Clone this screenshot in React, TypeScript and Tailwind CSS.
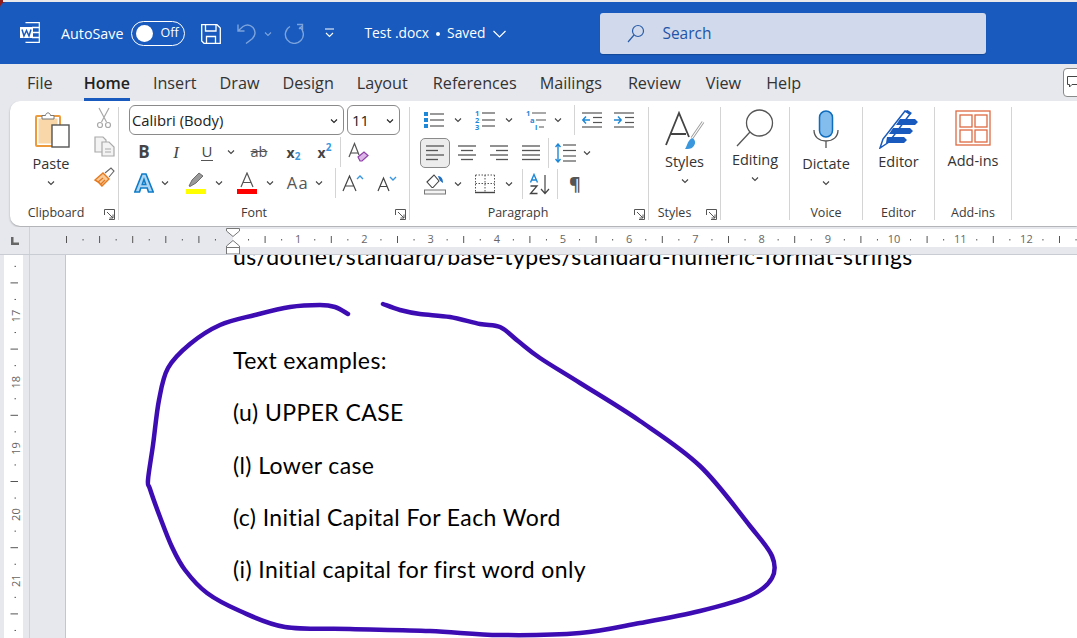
import React from "react";

const ui = "font-['Open_Sans',sans-serif]";

const tabs = ["File", "Home", "Insert", "Draw", "Design", "Layout", "References", "Mailings", "Review", "View", "Help"];

const tabClass: Record<string, string> = {
    File: "mr-[8px]",
    Home: "text-[16px] font-semibold text-[#222] border-b-[3px] border-[#185abd] pt-[3px]",
    References: "ml-[2px]",
    Review: "ml-[3px]",
    View: "ml-[2px]",
    Help: "ml-[2px]",
};

const docLines = ["Text examples:", "(u) UPPER CASE", "(l) Lower case", "(c) Initial Capital For Each Word", "(i) Initial capital for first word only"];

const inkPoints: [number, number][] = [
    [348, 59], [335, 52], [320, 50], [290, 52], [255, 60], [220, 70], [190, 89], [168, 113], [159, 145],
    [153, 190], [148, 225], [150, 234], [160, 262], [172, 292], [185, 315], [207, 338], [240, 356], [285, 372],
    [350, 374], [430, 376], [500, 380], [580, 378], [640, 368], [700, 356], [750, 341], [772, 323], [772, 301],
    [750, 271], [700, 211], [640, 166], [580, 128], [540, 103], [518, 86], [500, 72], [480, 69], [450, 62], [420, 59], [400, 55], [383, 49],
];

// smooth line through the hand drawn points
function smoothPath(pts: [number, number][]) {
    let d = `M${pts[0][0]} ${pts[0][1]}`;
    for (let i = 0; i < pts.length - 1; i++) {
        const p0 = pts[Math.max(i - 1, 0)];
        const p1 = pts[i];
        const p2 = pts[i + 1];
        const p3 = pts[Math.min(i + 2, pts.length - 1)];
        d += ` C${p1[0] + (p2[0] - p0[0]) / 6} ${p1[1] + (p2[1] - p0[1]) / 6} ${p2[0] - (p3[0] - p1[0]) / 6} ${p2[1] - (p3[1] - p1[1]) / 6} ${p2[0]} ${p2[1]}`;
    }
    return d;
}

function Chev({ c = "#444", s = 8 }: { c?: string; s?: number }) {
    return (
        <svg width={s} height={s} viewBox="0 0 8 8" fill="none">
            <path d="M1 2.500 4 5.500 7 2.500" stroke={c} strokeWidth="1.100" />
        </svg>
    );
}

function Launcher() {
    return (
        <svg width="11" height="11" viewBox="0 0 11 11" fill="none" stroke="#555" strokeWidth="1">
            <path d="M.5 6V.5H10.500V10.500H5" />
            <path d="M3 3 9 9M9 5.500V9H5.500" />
        </svg>
    );
}

function Cell({ className = "", children }: { className?: string; children?: React.ReactNode }) {
    return <div className={`flex items-center justify-center shrink-0 h-full ${className}`}>{children}</div>;
}

function Sep() {
    return <div className="w-px my-[6px] bg-[#d4d4d4] shrink-0" />;
}

function RowSep({ className = "" }: { className?: string }) {
    return <div className={`w-px h-[30px] bg-[#d4d4d4] shrink-0 ${className}`} />;
}

function Group({ label, launcher, labelClass = "", className = "", children }: { label: string; launcher?: boolean; labelClass?: string; className?: string; children: React.ReactNode }) {
    return (
        <div className={`relative flex flex-col shrink-0 ${className}`}>
            <div className="flex-1 min-h-0">{children}</div>
            <div className={`h-[16px] mb-[5px] flex items-center justify-center text-[12.500px] leading-none text-[#3a3a3a] ${labelClass}`}>{label}</div>
            {launcher && (
                <div className="absolute right-[3px] bottom-[6px] flex">
                    <Launcher />
                </div>
            )}
        </div>
    );
}

function BigButton({ icon, text, chev = true, className = "" }: { icon: React.ReactNode; text: string; chev?: boolean; className?: string }) {
    return (
        <div className={`flex flex-col items-center ${className}`}>
            {icon}
            <div className="text-[14.500px] leading-[20px] text-[#333]">{text}</div>
            {chev && (
                <div className="mt-[5px] flex">
                    <Chev />
                </div>
            )}
        </div>
    );
}

function Lines({ x = 4, w = 16, ys = [6, 12, 18], c = "#555" }: { x?: number; w?: number; ys?: number[]; c?: string }) {
    return <>{ys.map((y) => <path key={y} d={`M${x} ${y}h${w}`} stroke={c} strokeWidth="1.200" />)}</>;
}

function AlignIcon({ kind }: { kind: "left" | "center" | "right" | "justify" }) {
    const rows = [4, 8.500, 13, 17.500];
    const long = 18;
    const short = 12;
    return (
        <svg width="22" height="22" viewBox="0 0 22 22" fill="none">
            {rows.map((y, i) => {
                const w = kind === "justify" || i % 2 === 0 ? long : short;
                const x = kind === "left" || kind === "justify" ? 2 : kind === "right" ? 20 - w : 11 - w / 2;
                return <path key={y} d={`M${x} ${y}h${w}`} stroke="#555" strokeWidth="1.300" />;
            })}
        </svg>
    );
}

function TitleBar() {
    return (
        <div className="bg-[#8f1d1d] shrink-0">
            <div className="h-[2px] ml-[3px] bg-[#ebe9e9]" />
            <div className="h-[62px] pt-[1px] bg-[#185abd] rounded-tl-[6px] flex items-center text-white">
                <svg className="ml-[20px] mb-[2px]" width="20" height="21" viewBox="0 0 20 21" fill="none">
                    <path d="M5.500 .7H19.300V20.300H5.500" stroke="#fff" strokeWidth="1.200" />
                    <path d="M12 5.500h7M12 10.500h7M12 15.500h7" stroke="#fff" strokeWidth="1.300" />
                    <rect x="0" y="5" width="13" height="11" fill="#fff" />
                    <path d="M2 7.500 4 14 6.500 8.500 9 14 11 7.500" stroke="#185abd" strokeWidth="1.500" />
                </svg>
                <span className="ml-[21px] text-[14.300px]">AutoSave</span>
                <div className="ml-[8px] w-[54px] h-[25px] rounded-full border border-white flex items-center pl-[4px]">
                    <div className="w-[17px] h-[17px] rounded-full bg-white" />
                    <span className="ml-[7px] text-[12.500px] leading-none">Off</span>
                </div>
                <svg className="ml-[16px]" width="20" height="20" viewBox="0 0 20 20" fill="none" stroke="#fff" strokeWidth="1.300">
                    <path d="M.7.7H16L19.300 4V19.300H3L.7 17Z" />
                    <path d="M4.500.7V7H15V.7M5.500 19.300V12.500H14.500V19.300" />
                </svg>
                <svg className="ml-[16px]" width="19" height="21" viewBox="0 0 19 21" fill="none" stroke="#7ca3dc" strokeWidth="1.400">
                    <path d="M1 1.500V8H7.500M1.500 7.500 6 3.500C9 1.500 13 1.500 16 4.500 18.800 8 18.500 12 15.500 15.500L9 20.500" />
                </svg>
                <div className="ml-[8px] flex">
                    <Chev c="#7ca3dc" />
                </div>
                <svg className="ml-[12px]" width="20" height="21" viewBox="0 0 20 21" fill="none" stroke="#7ca3dc" strokeWidth="1.400">
                    <path d="M13 1.500H18.500V7M18.300 3 15 6M6 3.500A9 9 0 1 0 15.500 4" />
                </svg>
                <svg className="ml-[21px]" width="9" height="11" viewBox="0 0 9 11" fill="none" stroke="#fff" strokeWidth="1.100">
                    <path d="M0 1h9M1 5 4.500 8.500 8 5" />
                </svg>
                <span className="ml-[30px] text-[13.800px] whitespace-nowrap">Test .docx</span>
                <span className="ml-[7px] w-[4px] h-[4px] rounded-full bg-white" />
                <span className="ml-[7px] text-[13.800px]">Saved</span>
                <svg className="ml-[8px]" width="13" height="8" viewBox="0 0 13 8" fill="none" stroke="#fff" strokeWidth="1.200">
                    <path d="M.5 1 6.500 7 12.500 1" />
                </svg>
                <div className="ml-[94px] w-[386px] h-[41px] rounded-[3px] bg-[#d0daec] flex items-center pl-[27px] text-[#1f54a8] shadow-[0_1px_1px_rgba(0,0,0,0.2)]">
                    <svg width="18" height="19" viewBox="0 0 18 19" fill="none" stroke="#2a5ba8" strokeWidth="1.200">
                        <circle cx="11" cy="7" r="5.500" />
                        <path d="M7 11 1 18" />
                    </svg>
                    <span className="ml-[17px] text-[15.500px]">Search</span>
                </div>
            </div>
        </div>
    );
}

function TabRow() {
    return (
        <div className="h-[37px] pt-[1px] flex bg-[#e6e8ed] pl-[27px] gap-[23px] relative shrink-0 text-[16.200px] text-[#333]">
            {tabs.map((t) => (
                <div key={t} className={`h-full flex items-center relative ${tabClass[t] ?? ""}`}>
                    {t}
                </div>
            ))}
            <div className="absolute right-[-10px] top-[4px] w-[24px] h-[29px] rounded-[4px] border border-[#8a8a8a] bg-white pl-[3px] pt-[7px]">
                <svg width="12" height="13" viewBox="0 0 12 13" fill="none" stroke="#444" strokeWidth="1">
                    <path d="M.5.5H11.500V8.500H5L2.500 11V8.500H.5Z" />
                </svg>
            </div>
        </div>
    );
}

function ClipboardGroup() {
    return (
        <Group label="Clipboard" launcher labelClass="pr-[16px]" className="w-[108px]">
            <div className="flex h-full">
                <div className="w-[82px] flex justify-center pt-[10px]">
                    <BigButton
                        text="Paste"
                        icon={
                            <svg width="36" height="38" viewBox="0 0 36 38" fill="none" className="mb-[5px] ml-[3px]">
                                <rect x="1" y="5" width="24" height="30" rx="1" fill="#fff" stroke="#ec9a3c" strokeWidth="2" />
                                <rect x="3.500" y="7.500" width="19" height="25" fill="#f9d7a8" />
                                <path d="M7 8V4.500H10.500C11 1 15 1 15.500 4.500H19V8Z" fill="#fff" stroke="#777" strokeWidth="1" />
                                <rect x="17" y="14" width="17" height="22" fill="#fff" stroke="#555" strokeWidth="1.400" />
                            </svg>
                        }
                    />
                </div>
                <div className="flex flex-col items-center w-[24px] pt-[5px]">
                    <svg width="16" height="22" viewBox="0 0 16 22" fill="none" stroke="#a8a8a8" strokeWidth="1.200" className="mt-[1px]">
                        <path d="M3 1 10.500 15M13 1 5.500 15" />
                        <circle cx="4" cy="18" r="2.500" />
                        <circle cx="12" cy="18" r="2.500" />
                    </svg>
                    <svg width="21" height="21" viewBox="0 0 21 21" fill="none" stroke="#aaa" strokeWidth="1.200" className="mt-[7px]">
                        <path d="M1 1H9L12 4V16H1Z" fill="#f3f3f3" />
                        <path d="M8 6H15L20 11V20H8Z" fill="#f3f3f3" />
                        <path d="M11 13H17M11 16H17" />
                    </svg>
                    <svg width="21" height="20" viewBox="0 0 21 20" fill="none" className="mt-[10px]">
                        <path d="M1 13 9 6 15 12 8 19C6 16 3 14 1 13Z" fill="#f9c998" stroke="#e57a1f" strokeWidth="1.400" />
                        <path d="M4 15 9 11M7 17 11 13" stroke="#e57a1f" strokeWidth="1.200" />
                        <path d="M11 6 17 1 20 4 15 10" fill="#fff" stroke="#666" strokeWidth="1.100" />
                    </svg>
                </div>
            </div>
        </Group>
    );
}

function FontGroup() {
    const letter = "text-[#444] leading-none";
    return (
        <Group label="Font" launcher labelClass="pr-[20px]" className="w-[290px]">
            <div className="pl-[9px]">
                <div className="flex gap-[3px] pt-[4px] pl-[1px]">
                    <div className="w-[215px] h-[30px] rounded-[6px] border border-[#8a8a8a] flex items-center justify-between pl-[2px] pr-[5px] pt-[1px] text-[14.800px] text-[#222]">
                        Calibri (Body)
                        <Chev c="#222" />
                    </div>
                    <div className="w-[53px] h-[30px] rounded-[6px] border border-[#8a8a8a] flex items-center justify-between pl-[4px] pr-[5px] pt-[1px] text-[14.800px] text-[#222]">
                        11
                        <Chev c="#222" />
                    </div>
                </div>
                <div className="flex h-[30px] mt-[2px] items-center">
                    <Cell className="w-[32px] text-[17px] font-bold text-[#444]">B</Cell>
                    <Cell className={`w-[32px] text-[17px] italic ${letter} font-['Liberation_Serif',serif]`}>I</Cell>
                    <Cell className="w-[30px]">
                        <div className="text-[15px] leading-[17px] border-b-[1.500px] border-[#555] text-[#444] px-[1px]">U</div>
                    </Cell>
                    <Cell className="w-[18px]"><Chev /></Cell>
                    <Cell className="w-[38px] relative text-[14.500px] text-[#555]">
                        <span className="line-through">ab</span>
                    </Cell>
                    <Cell className="w-[31px]">
                        <span className="text-[14px] font-bold text-[#444]">x</span>
                        <span className="text-[10px] font-bold text-[#3a96dd] mt-[8px]">2</span>
                    </Cell>
                    <Cell className="w-[31px]">
                        <span className="text-[14px] font-bold text-[#444]">x</span>
                        <span className="text-[10px] font-bold text-[#3a96dd] mb-[9px]">2</span>
                    </Cell>
                    <RowSep />
                    <Cell className="w-[34px]">
                        <svg width="22" height="20" viewBox="0 0 22 20" fill="none">
                            <path d="M2 15 7.500 1.500 12 13" stroke="#555" strokeWidth="1.200" />
                            <path d="M4 11h7" stroke="#555" strokeWidth="1.100" />
                            <path d="M11 15 17 10 21 13.500 15 19H13Z" fill="#dcb6e6" stroke="#8e3fa8" strokeWidth="1.200" />
                        </svg>
                    </Cell>
                </div>
                <div className="flex h-[32px] items-center">
                    <Cell className="w-[32px]">
                        <svg width="20" height="20" viewBox="0 0 20 20" fill="none">
                            <path d="M.8 19 8 1H12L19.200 19H14.500L13.200 15H6.800L5.500 19ZM8.300 11.500H11.700L10 6.500Z" fill="#aed5f2" stroke="#0f7cc9" strokeWidth="1.600" />
                        </svg>
                    </Cell>
                    <Cell className="w-[10px]"><Chev /></Cell>
                    <Cell className="w-[32px] ml-[10px]">
                        <svg width="20" height="22" viewBox="0 0 20 22" fill="none">
                            <path d="M3 14 6 8 13 1 17 4 10 11 4 14.500Z" fill="#999" stroke="#555" strokeWidth=".8" />
                            <rect y="17" width="20" height="5" fill="#ffff00" />
                        </svg>
                    </Cell>
                    <Cell className="w-[14px]"><Chev /></Cell>
                    <Cell className="w-[32px] ml-[5px]">
                        <svg width="20" height="22" viewBox="0 0 20 22" fill="none">
                            <path d="M4 15 10 1 16 15M6 10.500H14" stroke="#555" strokeWidth="1.200" />
                            <rect y="17" width="20" height="5" fill="#ff0000" />
                        </svg>
                    </Cell>
                    <Cell className="w-[14px]"><Chev /></Cell>
                    <Cell className="w-[32px] ml-[5px] text-[16.500px] text-[#555] tracking-[1.500px]">Aa</Cell>
                    <Cell className="w-[10px]"><Chev /></Cell>
                    <RowSep className="ml-[11px]" />
                    <Cell className="w-[34px]">
                        <svg width="22" height="18" viewBox="0 0 22 18" fill="none">
                            <path d="M1 17 7.500 2 14 17M3.500 12H11.500" stroke="#444" strokeWidth="1.200" />
                            <path d="M15 5 18 2 21 5" stroke="#3a96dd" strokeWidth="1.400" />
                        </svg>
                    </Cell>
                    <Cell className="w-[34px]">
                        <svg width="20" height="17" viewBox="0 0 20 17" fill="none">
                            <path d="M1 16 6.500 3 12 16M3 11.500H10" stroke="#444" strokeWidth="1.200" />
                            <path d="M13 2 16 5 19 2" stroke="#3a96dd" strokeWidth="1.400" />
                        </svg>
                    </Cell>
                </div>
            </div>
        </Group>
    );
}

function ParagraphGroup() {
    return (
        <Group label="Paragraph" launcher labelClass="pr-[22px]" className="w-[238px]">
            <div className="pl-[10px]">
                <div className="flex h-[30px] mt-[4px] items-center">
                    <Cell className="w-[28px]">
                        <svg width="20" height="18" viewBox="0 0 20 18" fill="none">
                            <rect x="0" y="1" width="4" height="4" fill="#1e88d8" />
                            <rect x="0" y="7" width="4" height="4" fill="#1e88d8" />
                            <rect x="0" y="13" width="4" height="4" fill="#1e88d8" />
                            <Lines x={6} w={14} ys={[3, 9, 15]} />
                        </svg>
                    </Cell>
                    <Cell className="w-[20px]"><Chev /></Cell>
                    <Cell className="w-[28px] ml-[3px]">
                        <svg width="20" height="22" viewBox="0 0 20 22" fill="none">
                            <text x="0" y="7" fontSize="7.500" fontWeight="700" fill="#1e88d8" fontFamily="Open Sans">1</text>
                            <text x="0" y="14" fontSize="7.500" fontWeight="700" fill="#1e88d8" fontFamily="Open Sans">2</text>
                            <text x="0" y="21" fontSize="7.500" fontWeight="700" fill="#1e88d8" fontFamily="Open Sans">3</text>
                            <Lines x={7} w={13} ys={[4, 11, 17]} />
                        </svg>
                    </Cell>
                    <Cell className="w-[20px]"><Chev /></Cell>
                    <Cell className="w-[28px] ml-[4px]">
                        <svg width="22" height="22" viewBox="0 0 22 22" fill="none">
                            <text x="0" y="7" fontSize="7.500" fontWeight="700" fill="#1e88d8" fontFamily="Open Sans">1</text>
                            <text x="4" y="14" fontSize="7.500" fontWeight="700" fill="#1e88d8" fontFamily="Open Sans">a</text>
                            <text x="9" y="21" fontSize="7.500" fontWeight="700" fill="#1e88d8" fontFamily="Open Sans">i</text>
                            <path d="M6 4H20M10 11H20M13 18H18" stroke="#555" strokeWidth="1.200" />
                        </svg>
                    </Cell>
                    <Cell className="w-[14px]"><Chev /></Cell>
                    <RowSep className="ml-[9px]" />
                    <Cell className="w-[32px] ml-[1px]">
                        <svg width="20" height="16" viewBox="0 0 20 16" fill="none">
                            <Lines x={0} w={20} ys={[1, 15]} />
                            <Lines x={11} w={9} ys={[5.500, 10.500]} />
                            <path d="M8 8H1M4 4.500 .8 8 4 11.500" stroke="#1e88d8" strokeWidth="1.400" />
                        </svg>
                    </Cell>
                    <Cell className="w-[32px]">
                        <svg width="20" height="16" viewBox="0 0 20 16" fill="none">
                            <Lines x={0} w={20} ys={[1, 15]} />
                            <Lines x={11} w={9} ys={[5.500, 10.500]} />
                            <path d="M0 8H7M4 4.500 7.200 8 4 11.500" stroke="#1e88d8" strokeWidth="1.400" />
                        </svg>
                    </Cell>
                </div>
                <div className="flex h-[30px] mt-[3px] items-center">
                    <Cell className="w-[30px] rounded-[5px] border border-[#8a8a8a] bg-[#ececec]"><AlignIcon kind="left" /></Cell>
                    <Cell className="w-[30px] ml-[2px]"><AlignIcon kind="center" /></Cell>
                    <Cell className="w-[30px] ml-[2px]"><AlignIcon kind="right" /></Cell>
                    <Cell className="w-[30px] ml-[2px]"><AlignIcon kind="justify" /></Cell>
                    <RowSep className="ml-[2px]" />
                    <Cell className="w-[30px] ml-[1px]">
                        <svg width="21" height="20" viewBox="0 0 21 20" fill="none">
                            <path d="M3 1V19M.5 4 3 1 5.500 4M.5 16 3 19 5.500 16" stroke="#1e88d8" strokeWidth="1.400" />
                            <Lines x={8} w={13} ys={[2, 7.500, 13, 18]} />
                        </svg>
                    </Cell>
                    <Cell className="w-[14px]"><Chev /></Cell>
                </div>
                <div className="flex h-[30px] mt-[1px] items-center">
                    <Cell className="w-[30px]">
                        <svg width="22" height="22" viewBox="0 0 22 22" fill="none">
                            <path d="M3 9 10 2 15 8 9 14.500H8Z" fill="#fff" stroke="#444" strokeWidth="1.100" />
                            <path d="M14 3C18 3 19 7 19 10 17 9 15 7 14 3Z" fill="#1e6fc4" />
                            <rect x=".5" y="17" width="21" height="4" fill="#f4f4f4" stroke="#777" />
                        </svg>
                    </Cell>
                    <Cell className="w-[16px]"><Chev /></Cell>
                    <Cell className="w-[28px] ml-[5px]">
                        <svg width="20" height="20" viewBox="0 0 20 20" fill="none">
                            <path d="M.5 1H19.500M.5 1V18M19.500 1V18M10 1V18M.5 9.500H19.500" stroke="#555" strokeWidth="1" strokeDasharray="1.500 1.500" />
                            <path d="M0 18.500H20" stroke="#444" strokeWidth="1.400" />
                        </svg>
                    </Cell>
                    <Cell className="w-[20px]"><Chev /></Cell>
                    <RowSep className="ml-[3px]" />
                    <Cell className="w-[34px]">
                        <svg width="22" height="22" viewBox="0 0 22 22" fill="none">
                            <path d="M1.500 9.500 5 1.500 8.500 9.500M2.800 7H7.200" stroke="#1e88d8" strokeWidth="1.400" />
                            <path d="M1.500 13H8L1.500 20.500H8.500" stroke="#444" strokeWidth="1.300" />
                            <path d="M16 2V20M12 16 16 20.500 20 16" stroke="#444" strokeWidth="1.200" />
                        </svg>
                    </Cell>
                    <RowSep />
                    <Cell className="w-[34px] text-[18px] font-bold text-[#555]">¶</Cell>
                </div>
            </div>
        </Group>
    );
}

function DocRuler() {
    const marks: React.ReactNode[] = [];
    // 16.55px per quarter, number 1 sits at x=298
    for (let q = -10; q <= 52; q++) {
        const x = 232 + q * 16.55;
        if (x < 60 || (x > 222 && x < 245)) continue;
        const kind = ((q % 4) + 4) % 4;
        if (kind === 0) {
            const n = q / 4;
            if (n > 0) {
                marks.push(<text key={q} x={x} y="16" textAnchor="middle" fontSize="11" fill="#666" fontFamily="Open Sans">{n}</text>);
            } else {
                marks.push(<path key={q} d={`M${x} 9V16`} stroke="#555" />);
            }
        } else if (kind === 2) {
            marks.push(<path key={q} d={`M${x} 9V16`} stroke="#555" />);
        } else {
            marks.push(<path key={q} d={`M${x} 12V13.500`} stroke="#555" />);
        }
    }
    return (
        <div className="relative h-[28px] shrink-0 bg-[#e6e8ed] border-b border-[#c9ccd2] flex">
            <div className="w-[30px] border-r border-[#cfd2d8] flex items-center justify-center">
                <svg width="8" height="8" viewBox="0 0 8 8" className="ml-[1px]">
                    <path d="M0 0H2.500V5.500H8V8H0Z" fill="#666" />
                </svg>
            </div>
            <div className="flex-1 relative overflow-hidden">
                <div className="absolute left-[203px] right-0 top-[2px] h-[18px] bg-white" />
                <svg className="absolute left-[-30px] top-0" width="1107" height="28" fill="none">
                    {marks}
                    <path d="M226.500 1.500H239.500V4L233 9.500 226.500 4Z" fill="#fff" stroke="#777" />
                    <path d="M233 13.500 239.500 19V27H226.500V19Z" fill="#fff" stroke="#777" />
                    <path d="M226.500 20.500H239.500" stroke="#777" />
                </svg>
            </div>
        </div>
    );
}

function SideRuler() {
    const marks: React.ReactNode[] = [];
    for (let q = 0; q <= 24; q++) {
        const y = 316 - 255 + (q - 4) * 16.55;
        if (y < 0) continue;
        const kind = q % 4;
        if (kind === 0) {
            const n = 16 + q / 4;
            marks.push(<text key={q} x="0" y="0" textAnchor="middle" dominantBaseline="central" fontSize="11" fill="#666" fontFamily="Open Sans" transform={`translate(15 ${y}) rotate(-90)`}>{n}</text>);
        } else if (kind === 2) {
            marks.push(<path key={q} d={`M10.500 ${y}H18`} stroke="#555" />);
        } else {
            marks.push(<path key={q} d={`M14.500 ${y}H16`} stroke="#555" />);
        }
    }
    return (
        <div className="w-[30px] shrink-0 border-r border-[#cfd2d8] pl-[4px] pr-[6px] flex">
            <div className="w-[19px] h-full bg-white overflow-hidden">
                <svg className="ml-[-4px]" width="23" height="384" fill="none">{marks}</svg>
            </div>
        </div>
    );
}

export default function App() {
    return (
        <div className={`w-[1077px] h-[638px] overflow-hidden flex flex-col bg-[#e6e8ed] ${ui}`}>
            <TitleBar />
            <TabRow />
            <div className="h-[125px] ml-[10px] bg-white rounded-l-[10px] flex shrink-0 shadow-[0_1px_2px_rgba(0,0,0,0.3)]">
                <ClipboardGroup />
                <Sep />
                <FontGroup />
                <Sep />
                <ParagraphGroup />
                <Sep />
                <Group label="Styles" launcher labelClass="pr-[20px]" className="w-[71px]">
                    <BigButton
                        className="pt-[10px]"
                        text="Styles"
                        icon={
                            <svg width="40" height="40" viewBox="0 0 40 40" fill="none" className="mb-[1px]">
                                <path d="M1 34 14 2 24 26M6 23H21" stroke="#444" strokeWidth="1.800" />
                                <path d="M38 11 27 27" stroke="#999" strokeWidth="3" />
                                <path d="M38 11 27 27" stroke="#fff" strokeWidth="1.200" />
                                <path d="M20 38C22 36 22 30 27 27 31 29 31 33 28 36 26 38 23 38 20 38Z" fill="#3a96dd" />
                            </svg>
                        }
                    />
                </Group>
                <Sep />
                <Group label="" className="w-[68px]">
                    <BigButton
                        className="pt-[8px]"
                        text="Editing"
                        icon={
                            <svg width="38" height="38" viewBox="0 0 38 38" fill="none" stroke="#555" strokeWidth="1.300" className="mb-[3px]">
                                <circle cx="23.500" cy="14" r="13" />
                                <path d="M14 23 1 37" />
                            </svg>
                        }
                    />
                </Group>
                <Sep />
                <Group label="Voice" className="w-[72px]">
                    <BigButton
                        className="pt-[9px]"
                        text="Dictate"
                        icon={
                            <svg width="26" height="38" viewBox="0 0 26 38" fill="none" className="mb-[6px]">
                                <rect x="6.500" y="1" width="13" height="26" rx="6.500" fill="#83bdee" stroke="#0f6cbd" strokeWidth="1.500" />
                                <path d="M1 20C1 27 6 31 13 31S25 27 25 20M13 31V38" stroke="#555" strokeWidth="1.300" />
                            </svg>
                        }
                    />
                </Group>
                <Sep />
                <Group label="Editor" className="w-[71px]">
                    <BigButton
                        className="pt-[8px]"
                        chev={false}
                        text="Editor"
                        icon={
                            <svg width="40" height="40" viewBox="0 0 40 40" fill="none" className="mb-[3px]">
                                <path d="M1 39 4 30 26 2 31 5 10 33Z" fill="#fff" stroke="#185abd" strokeWidth="1.500" />
                                <path d="M26 2 28.500 1 33 4 31 6Z" fill="#185abd" />
                                <path d="M21 10H36L39 13 36 16H17ZM14 19H31L34 22 31 25H10ZM8 28H25L28 31 25 34H7Z" fill="#185abd" />
                            </svg>
                        }
                    />
                </Group>
                <Sep />
                <Group label="Add-ins" className="w-[76px]">
                    <BigButton
                        className="pt-[9px]"
                        chev={false}
                        text="Add-ins"
                        icon={
                            <svg width="36" height="36" viewBox="0 0 36 36" fill="none" stroke="#dd6b42" strokeWidth="1.300" className="mb-[5px]">
                                <rect x="1" y="1" width="34" height="34" />
                                <rect x="5" y="5" width="12" height="12" />
                                <rect x="20" y="5" width="12" height="12" />
                                <rect x="5" y="20" width="12" height="12" />
                                <rect x="20" y="20" width="12" height="12" />
                            </svg>
                        }
                    />
                </Group>
                <Sep />
            </div>
            <div className="h-[1px] shrink-0" />
            <DocRuler />
            <div className="flex-1 min-h-0 flex">
                <SideRuler />
                <div className="w-[36px] shrink-0 border-r border-[#c4c6cb]" />
                <div className="relative flex-1 bg-white overflow-hidden pl-[167px] font-['Lato',sans-serif] text-[23px] tracking-[0.4px] text-black">
                    <div className="mt-[-12px] leading-[26px] whitespace-nowrap">us/dotnet/standard/base-types/standard-numeric-format-strings</div>
                    <div className="mt-[78px] flex flex-col gap-[26.300px]">
                        {docLines.map((l) => (
                            <div key={l} className="leading-[26px] whitespace-nowrap">{l}</div>
                        ))}
                    </div>
                    <svg className="absolute left-[-66px] top-0" width="1077" height="384" fill="none">
                        <path d={smoothPath(inkPoints)} stroke="#3d0cb3" strokeWidth="4.500" strokeLinecap="round" strokeLinejoin="round" />
                    </svg>
                </div>
            </div>
        </div>
    );
}
